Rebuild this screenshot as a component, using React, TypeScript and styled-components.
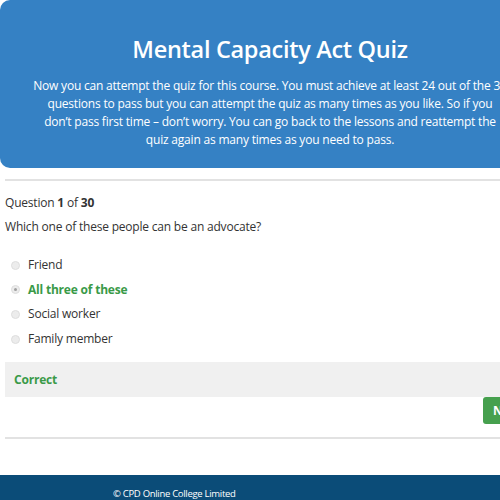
import React from 'react';
import styled, { createGlobalStyle } from 'styled-components';

const GlobalStyle = createGlobalStyle`
  html, body {
    margin: 0;
    padding: 0;
    overflow: hidden;
    background: #ffffff;
  }
  body {
    font-family: 'Open Sans', 'Noto Sans', sans-serif;
    color: #333333;
  }
`;

const Page = styled.div`
  width: 540px;
  display: flex;
  flex-direction: column;
`;

const Banner = styled.header`
  background-color: #3581c4;
  color: #ffffff;
  border-radius: 10px;
  padding: 33px 0 19px;
  text-align: center;
`;

const Title = styled.h1`
  margin: 0 0 12px;
  font-size: 23.5px;
  letter-spacing: -0.3px;
  font-weight: 600;
  line-height: 32px;
`;

const Intro = styled.p`
  margin: 0 auto;
  width: 500px;
  font-size: 12px;
  letter-spacing: -0.2px;
  line-height: 18px;
`;

const Main = styled.main`
  padding: 11px 0 0 5px;
`;

const Rule = styled.hr`
  margin: 0;
  border: 0;
  border-top: 2px solid #e2e2e2;
`;

const BodyText = styled.div`
  font-size: 12px;
  letter-spacing: -0.2px;
  line-height: 18px;
`;

const Counter = styled(BodyText)`
  margin-top: 13px;

  b {
    font-weight: 700;
  }
`;

const Question = styled(BodyText)`
  margin-top: 6px;
`;

const Options = styled.ul`
  list-style: none;
  margin: 20px 0 0;
  padding: 0 0 0 6px;
  display: flex;
  flex-direction: column;
  gap: 6.7px;
`;

const Option = styled.li<{ $correct?: boolean }>`
  display: flex;
  align-items: center;
  gap: 8px;
  font-size: 12px;
  letter-spacing: -0.2px;
  line-height: 18px;
  color: ${(p) => (p.$correct ? '#3a9a48' : '#333333')};
  font-weight: ${(p) => (p.$correct ? 700 : 400)};
`;

const Radio = styled.span<{ $checked?: boolean }>`
  width: 7px;
  height: 7px;
  border-radius: 50%;
  background: #ececec;
  border: 1px solid #dedede;
  display: inline-flex;
  align-items: center;
  justify-content: center;

  &::after {
    content: '';
    width: 3px;
    height: 3px;
    border-radius: 50%;
    background: ${(p) => (p.$checked ? '#a0a0a0' : 'transparent')};
  }
`;

const Feedback = styled.div`
  margin-top: 14px;
  background: #f0f0f0;
  height: 35px;
  display: flex;
  align-items: center;
  padding-left: 9px;
  font-size: 12px;
  letter-spacing: -0.2px;
  font-weight: 700;
  color: #3a9a48;
`;

const Actions = styled.div`
  display: flex;
  padding: 0 0 13px 478px;
`;

const NextButton = styled.button`
  height: 27px;
  width: 62px;
  padding: 0 0 0 10px;
  border: 0;
  border-radius: 3px;
  background: #46a04e;
  color: #ffffff;
  font-family: inherit;
  font-size: 12px;
  font-weight: 700;
  text-align: left;
`;

const Footer = styled.footer`
  margin-top: 36px;
  background: #0b4c78;
  height: 40px;
  padding: 12px 0 0 113px;
  box-sizing: border-box;
  color: #ffffff;
  font-size: 9.5px;
  letter-spacing: -0.3px;
  line-height: 14px;
`;

const options = [
  { label: 'Friend' },
  { label: 'All three of these', correct: true },
  { label: 'Social worker' },
  { label: 'Family member' },
];

export default function App() {
  return (
    <Page>
      <GlobalStyle />
      <Banner>
        <Title>Mental Capacity Act Quiz</Title>
        <Intro>
          Now you can attempt the quiz for this course. You must achieve at least 24 out of the 30
          <br />
          questions to pass but you can attempt the quiz as many times as you like. So if you
          <br />
          don’t pass first time – don’t worry. You can go back to the lessons and reattempt the
          <br />
          quiz again as many times as you need to pass.
        </Intro>
      </Banner>
      <Main>
        <Rule />
        <Counter>
          Question <b>1</b> of <b>30</b>
        </Counter>
        <Question>Which one of these people can be an advocate?</Question>
        <Options>
          {options.map((o) => (
            <Option key={o.label} $correct={o.correct}>
              <Radio $checked={o.correct} />
              {o.label}
            </Option>
          ))}
        </Options>
        <Feedback>Correct</Feedback>
        <Actions>
          <NextButton>Next</NextButton>
        </Actions>
        <Rule />
      </Main>
      <Footer>© CPD Online College Limited</Footer>
    </Page>
  );
}
